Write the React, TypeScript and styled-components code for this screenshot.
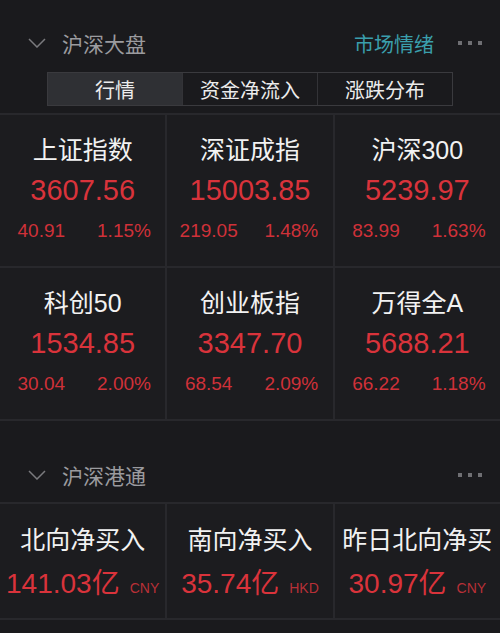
import React from 'react';
import styled, { createGlobalStyle } from 'styled-components';

const GlobalStyle = createGlobalStyle`
    html, body {
        margin: 0;
        padding: 0;
        background: #1a1a1d;
    }
    body {
        font-family: "Liberation Sans", "Noto Sans CJK SC", sans-serif;
        color: #f0f0f0;
    }
`;

const Page = styled.div`
    width: 500px;
    height: 633px;
    overflow: hidden;
    background: #1a1a1d;
`;

const SectionHeader = styled.div<{ $top: number }>`
    margin-top: ${p => p.$top}px;
    height: 50px;
    display: flex;
    align-items: center;
    padding: 0 18px 0 28px;
`;

const Chevron = styled.svg`
    width: 18px;
    height: 10px;
    flex: none;
`;

const Title = styled.div`
    margin-left: 16px;
    font-size: 21px;
    color: #9b9b9f;
    flex: 1;
`;

const Link = styled.div`
    font-size: 20px;
    color: #3a9fac;
    margin-right: 24px;
`;

const Dots = styled.div`
    display: flex;
    gap: 6px;
    span {
        width: 4px;
        height: 4px;
        background: #6f6f73;
    }
`;

const Tabs = styled.div`
    margin: 4px 47px 0;
    height: 34px;
    display: flex;
    border: 1px solid #3a3a3e;
    box-sizing: border-box;
`;

const Tab = styled.div<{ $active?: boolean }>`
    flex: 1;
    display: flex;
    align-items: center;
    justify-content: center;
    font-size: 20px;
    color: #ececec;
    background: ${p => (p.$active ? '#2f3034' : 'transparent')};
    & + & {
        border-left: 1px solid #333337;
    }
`;

const Grid = styled.div<{ $top: number; $row: number }>`
    margin-top: ${p => p.$top}px;
    display: grid;
    grid-template-columns: repeat(3, 1fr);
    grid-auto-rows: ${p => p.$row}px;
    gap: 2px;
    background: #28282c;
    border-top: 2px solid #28282c;
    border-bottom: 2px solid #28282c;
`;

const Cell = styled.div<{ $pad: number }>`
    background: #1c1c1f;
    display: flex;
    flex-direction: column;
    align-items: center;
    padding-top: ${p => p.$pad}px;
    overflow: hidden;
`;

const Name = styled.div`
    font-size: 25px;
    line-height: 30px;
    color: #f2f2f2;
    white-space: nowrap;
`;

const Value = styled.div<{ $gap: number }>`
    margin-top: ${p => p.$gap}px;
    font-size: 29px;
    line-height: 34px;
    color: #d9333b;
    white-space: nowrap;
`;

const Changes = styled.div`
    margin-top: 12px;
    width: 100%;
    display: grid;
    grid-template-columns: 1fr 1fr;
    font-size: 19px;
    line-height: 24px;
    color: #cf3139;
    text-align: center;
`;

const Amount = styled.span`
    font-size: 28px;
`;

const Currency = styled.span`
    margin-left: 10px;
    font-size: 14px;
    color: #b83037;
`;

const indices = [
    { name: '上证指数', value: '3607.56', diff: '40.91', pct: '1.15%' },
    { name: '深证成指', value: '15003.85', diff: '219.05', pct: '1.48%' },
    { name: '沪深300', value: '5239.97', diff: '83.99', pct: '1.63%' },
    { name: '科创50', value: '1534.85', diff: '30.04', pct: '2.00%' },
    { name: '创业板指', value: '3347.70', diff: '68.54', pct: '2.09%' },
    { name: '万得全A', value: '5688.21', diff: '66.22', pct: '1.18%' },
];

const flows = [
    { name: '北向净买入', value: '141.03', unit: 'CNY' },
    { name: '南向净买入', value: '35.74', unit: 'HKD' },
    { name: '昨日北向净买', value: '30.97', unit: 'CNY' },
];

const ChevronIcon = () => (
    <Chevron viewBox="0 0 18 10">
        <path d="M1 1 L9 9 L17 1" fill="none" stroke="#7a7a7e" strokeWidth="1.5" />
    </Chevron>
);

const MoreDots = () => (
    <Dots>
        <span />
        <span />
        <span />
    </Dots>
);

export default function App() {
    return (
        <Page>
            <GlobalStyle />
            <SectionHeader $top={18}>
                <ChevronIcon />
                <Title>沪深大盘</Title>
                <Link>市场情绪</Link>
                <MoreDots />
            </SectionHeader>
            <Tabs>
                <Tab $active>行情</Tab>
                <Tab>资金净流入</Tab>
                <Tab>涨跌分布</Tab>
            </Tabs>
            <Grid $top={7} $row={151}>
                {indices.map(i => (
                    <Cell key={i.name} $pad={20}>
                        <Name>{i.name}</Name>
                        <Value $gap={8}>{i.value}</Value>
                        <Changes>
                            <span>{i.diff}</span>
                            <span>{i.pct}</span>
                        </Changes>
                    </Cell>
                ))}
            </Grid>
            <SectionHeader $top={29}>
                <ChevronIcon />
                <Title>沪深港通</Title>
                <MoreDots />
            </SectionHeader>
            <Grid $top={2} $row={114}>
                {flows.map(f => (
                    <Cell key={f.name} $pad={21}>
                        <Name>{f.name}</Name>
                        <Value $gap={11}>
                            <Amount>{f.value}亿</Amount>
                            <Currency>{f.unit}</Currency>
                        </Value>
                    </Cell>
                ))}
            </Grid>
        </Page>
    );
}
